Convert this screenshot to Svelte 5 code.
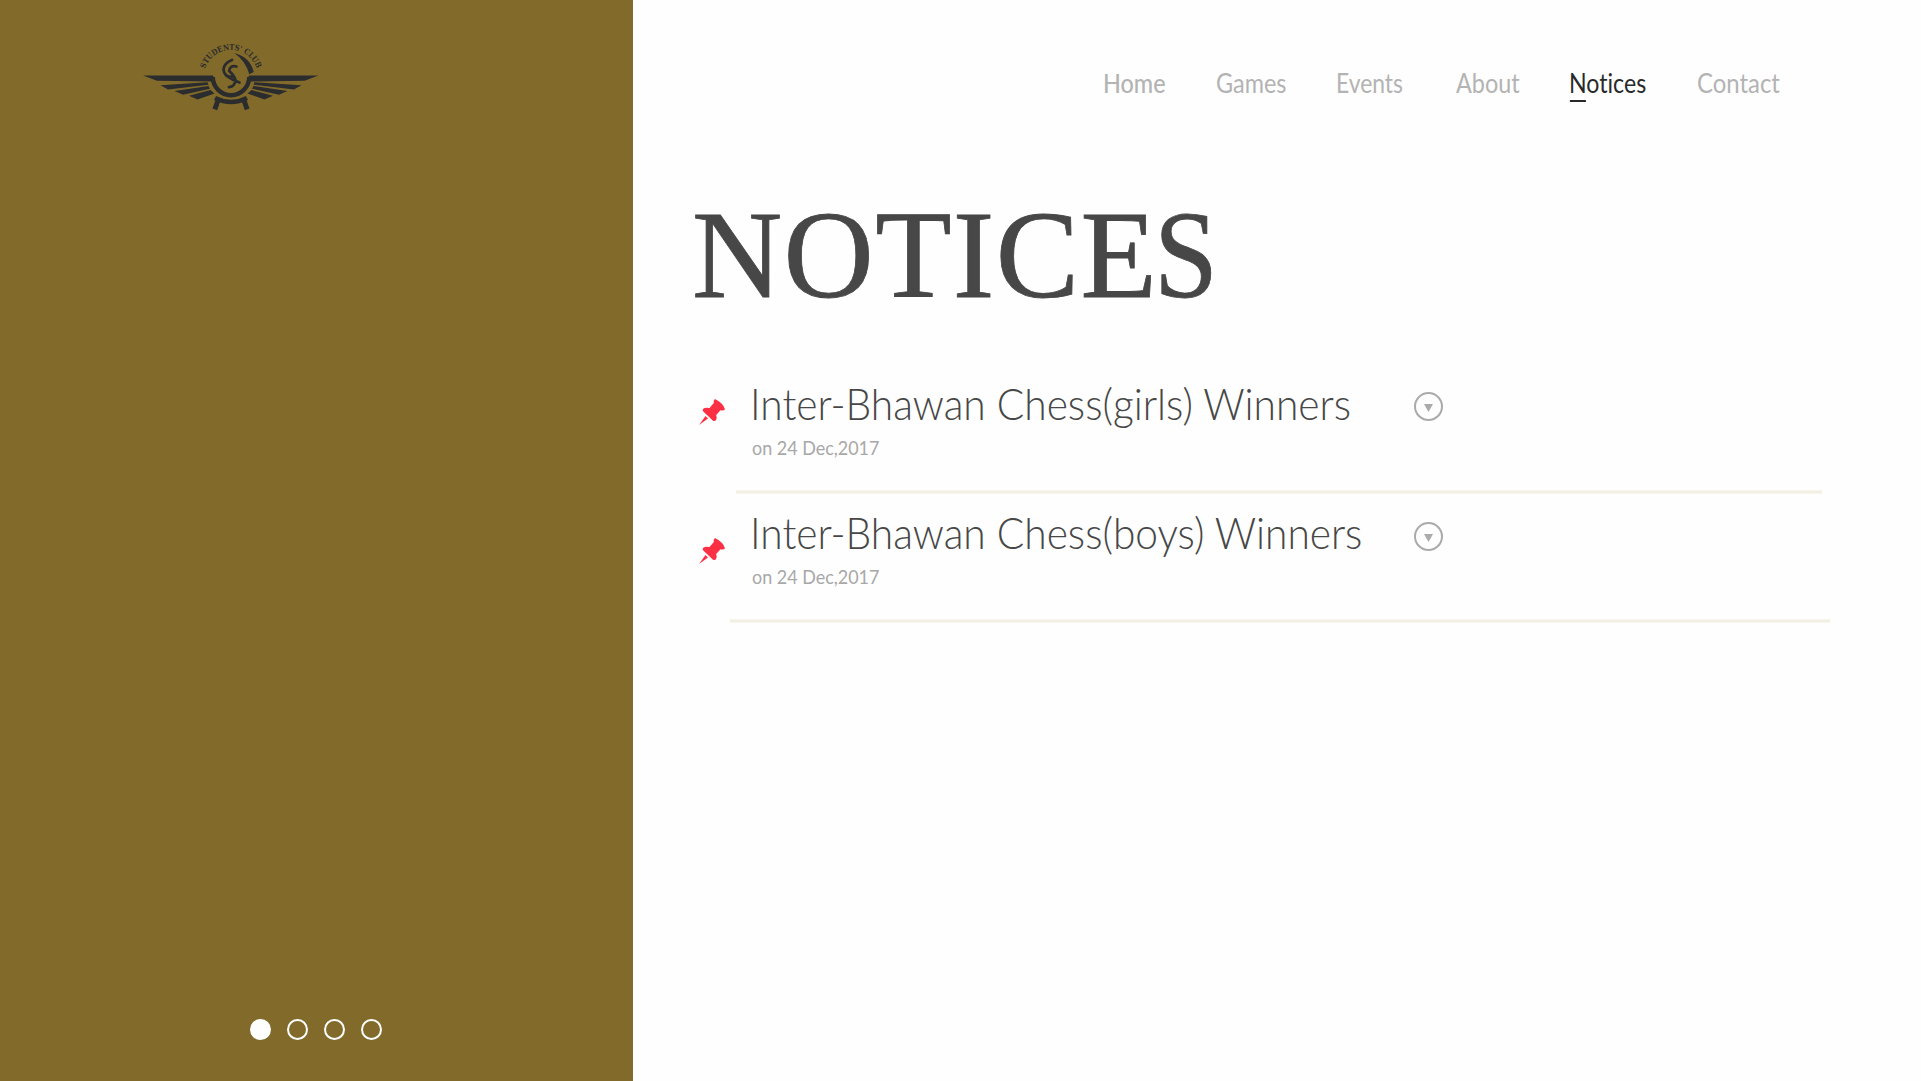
<script>
  const links = [
    { label: 'Home', id: 'home' },
    { label: 'Games', id: 'games' },
    { label: 'Events', id: 'events' },
    { label: 'About', id: 'about' },
    { label: 'Notices', id: 'notices', active: true },
    { label: 'Contact', id: 'contact' },
  ];
  const notices = [
    { title: 'Inter-Bhawan Chess(girls) Winners', date: 'on 24 Dec,2017', id: 'first' },
    { title: 'Inter-Bhawan Chess(boys) Winners', date: 'on 24 Dec,2017', id: 'second' },
  ];
  const slides = [true, false, false, false];
</script>

<div class="page">
  <aside class="side">
    <svg class="logo" viewBox="143 35 176 80" aria-label="Students' Club">
      <defs>
        <path id="arc" d="M204 76.800A27 27 0 0 1 258 76.800" />
      </defs>
      <g fill="#2b2c2e">
        <path d="M143 75.500H213L216 83.500L212.500 81.600L157 80.800Z" />
        <path d="M160.500 85.300L207.500 82.200L208.500 84.800L168 89.400Z" />
        <path d="M174.500 91L208.500 86L210 88.700L183 94.800Z" />
        <path d="M189 95.800L210.500 90L214.500 93.500L197.500 99.400Z" />
        <path d="M318.500 75.500H249L246 83.500L249.500 81.600L304.500 80.800Z" />
        <path d="M301.500 85.300L254.500 82.200L253.500 84.800L294 89.400Z" />
        <path d="M287.500 91L253.500 86L252 88.700L279 94.800Z" />
        <path d="M273 95.800L251.500 90L247.500 93.500L264.500 99.400Z" />
        <path d="M234.300 53.300Q250 57 253.800 72L249.300 74.300Q245 60 234.300 53.300Z" />
      </g>
      <g fill="none" stroke="#2b2c2e">
        <path stroke-width="4.400" d="M212.800 77A18.200 18.200 0 0 0 249.200 77" />
        <path stroke-width="4.600" d="M215 98Q231 106 247 98" />
        <path stroke-width="5" d="M218.500 99L214.800 109.300M243.500 99L247.200 109.300" />
        <path stroke-width="2.800" stroke-linecap="round" d="M232 60Q224 63 223.500 69.500Q224 76.500 232 77M236.500 66.500Q229.500 65 229.300 71Q234.500 76 235.500 80Q235 86.500 229 87.200M226 75.500Q232 80 239.500 82.500" />
      </g>
      <text class="logo-text"><textPath href="#arc" startOffset="8" textLength="68" lengthAdjust="spacingAndGlyphs">STUDENTS' CLUB</textPath></text>
    </svg>
    <div class="dots">
      {#each slides as current}
        <span class="dot" class:current></span>
      {/each}
    </div>
  </aside>

  <main>
    <nav>
      {#each links as link}
        <a class={link.id} class:active={link.active} href="#{link.id}">{link.label}</a>
      {/each}
    </nav>
    <h1>NOTICE<span>S</span></h1>
    {#each notices as notice}
      <article class={notice.id}>
        <svg class="pin" viewBox="0 0 26 26">
          <path fill="#fc3044" d="M16 0Q14 1.500 14.800 4L10.500 9Q6 8 4 10Q3.200 11 4.300 12.500L14 21.700Q16 22.800 17 21Q18.200 18.500 17.200 16L21.500 11.300Q25 12 26 10.300Q24 4 16 0ZM6.500 17L0 26L9 19.500Z" />
        </svg>
        <div class="text">
          <h2>{notice.title}</h2>
          <p>{notice.date}</p>
        </div>
        <svg class="toggle" viewBox="0 0 29 29">
          <circle cx="14.500" cy="14.500" r="13.500" />
          <path d="M10 12H19L14.500 20Z" />
        </svg>
      </article>
      <hr class={notice.id} />
    {/each}
  </main>
</div>

<style>
  :global(body) { margin: 0; background: #fefefe; }
  .page {
    display: grid;
    grid-template-columns: 633px 1fr;
    height: 1081px;
    overflow: hidden;
    font-family: Lato, "Liberation Sans", sans-serif;
    font-variant-ligatures: none;
  }
  .side {
    box-sizing: border-box;
    background: #826b2a;
    display: flex;
    flex-direction: column;
    justify-content: space-between;
    padding: 35px 0 41px 143px;
  }
  .logo { width: 176px; height: 80px; display: block; }
  .logo-text { font: 700 8px "DejaVu Serif", serif; fill: #2b2c2e; }
  .dots { display: flex; gap: 16px; padding-left: 107px; }
  .dot {
    box-sizing: border-box;
    width: 21px;
    height: 21px;
    border: 2px solid #fff;
    border-radius: 50%;
  }
  .dot.current { background: #fff; }
  main { padding-left: 60px; }
  nav {
    display: grid;
    grid-template-columns: 113px 120px 119px 114px 127px 100px;
    height: 116px;
    padding: 67px 0 0 410px;
    box-sizing: border-box;
    font-size: 26px;
    line-height: 32px;
  }
  nav a {
    color: #b3b3b3;
    text-decoration: none;
    white-space: nowrap;
    transform: scaleX(.9);
    transform-origin: 0 0;
  }
  nav .home { font-weight: 500; }
  nav .events { transform: scaleX(.88); }
  nav .about { transform: translateX(1px) scaleX(.9); }
  nav .contact { transform: translateX(1px) scaleX(.92); }
  nav .notices { transform: scaleX(.89); }
  nav .active { color: #292929; }
  nav .active::after {
    content: "";
    display: block;
    width: 18px;
    height: 2px;
    margin: 1px 0 0 1px;
    background: #292929;
  }
  h1 {
    margin: 69px 0 0 -1px;
    height: 140px;
    font: 400 125px/140px "Liberation Serif", serif;
    letter-spacing: 1.300px;
    color: #474747;
    -webkit-text-stroke: .8px #474747;
    white-space: nowrap;
  }
  h1 span {
    display: inline-block;
    margin-left: -4px;
    transform: scaleX(.92);
    transform-origin: 0 0;
  }
  article {
    display: grid;
    grid-template-columns: 57px 664px 29px;
    height: 112px;
    box-sizing: border-box;
  }
  article.first { margin-top: 53px; }
  .pin { width: 26px; height: 26px; margin: 21px 0 0 6px; }
  .second .pin { margin-top: 31px; }
  h2 {
    margin: 0;
    font-size: 43px;
    font-weight: 300;
    line-height: 52px;
    white-space: nowrap;
    color: #474747;
    transform: scaleX(.946);
    transform-origin: 0 0;
  }
  p {
    margin: 6px 0 0 2px;
    font-size: 19.500px;
    line-height: 24px;
    color: #a8a8a8;
    transform: scaleX(.92);
    transform-origin: 0 0;
  }
  .toggle { width: 29px; height: 29px; margin-top: 14px; }
  .second .toggle { margin-top: 15px; }
  .toggle circle { fill: none; stroke: #aaa; stroke-width: 2; }
  .toggle path { fill: #aaa; }
  hr {
    margin: 0 99px 0 43px;
    height: 4px;
    border: 0;
    background: linear-gradient(#faf8f3, #f0ece0, #faf8f3);
  }
  hr.first { margin-bottom: 13px; }
  hr.second { margin: 0 91px 0 37px; }
</style>
